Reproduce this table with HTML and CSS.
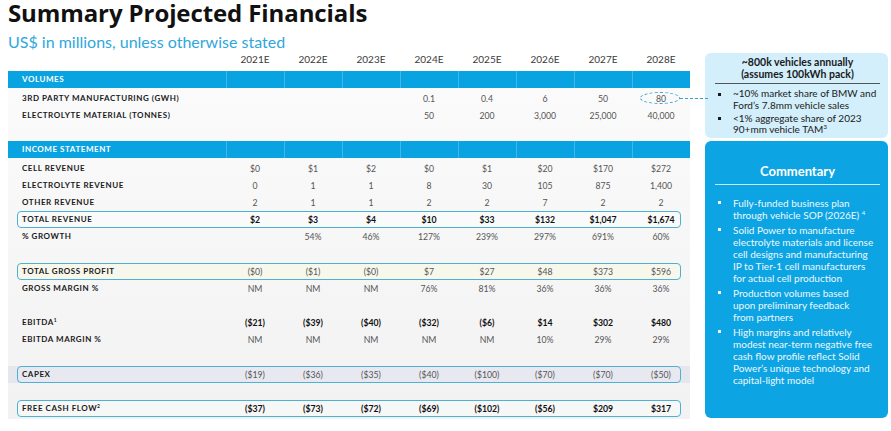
FILE: index.html
```html
<!DOCTYPE html>
<html lang="en">
<head>
<meta charset="utf-8">
<title>Summary Projected Financials</title>
<link rel="stylesheet" href="styles.css">
</head>
<body>
<div class="page">
  <h1 class="title">Summary Projected Financials</h1>
  <div class="main">
    <div class="left">
      <div class="subtitle">US$ in millions, unless otherwise stated</div>
      <div class="row yrs">
        <div></div><div class="c">2021E</div><div class="c">2022E</div><div class="c">2023E</div><div class="c">2024E</div><div class="c">2025E</div><div class="c">2026E</div><div class="c">2027E</div><div class="c">2028E</div>
      </div>
      <div class="tbl">
        <div class="row bar"><div class="lbl">Volumes</div><div class="c"></div><div class="c"></div><div class="c"></div><div class="c"></div><div class="c"></div><div class="c"></div><div class="c"></div><div class="c"></div></div>
        <div class="row"><div class="lbl">3rd Party Manufacturing (GWh)</div><div class="c"></div><div class="c"></div><div class="c"></div><div class="c">0.1</div><div class="c">0.4</div><div class="c">6</div><div class="c">50</div><div class="c circ">80</div></div>
        <div class="row"><div class="lbl">Electrolyte Material (Tonnes)</div><div class="c"></div><div class="c"></div><div class="c"></div><div class="c">50</div><div class="c">200</div><div class="c">3,000</div><div class="c">25,000</div><div class="c">40,000</div></div>
        <div class="row"></div>
        <div class="row bar"><div class="lbl">Income Statement</div><div class="c"></div><div class="c"></div><div class="c"></div><div class="c"></div><div class="c"></div><div class="c"></div><div class="c"></div><div class="c"></div></div>
        <div class="row"><div class="lbl">Cell Revenue</div><div class="c">$0</div><div class="c">$1</div><div class="c">$2</div><div class="c">$0</div><div class="c">$1</div><div class="c">$20</div><div class="c">$170</div><div class="c">$272</div></div>
        <div class="row"><div class="lbl">Electrolyte Revenue</div><div class="c">0</div><div class="c">1</div><div class="c">1</div><div class="c">8</div><div class="c">30</div><div class="c">105</div><div class="c">875</div><div class="c">1,400</div></div>
        <div class="row"><div class="lbl">Other Revenue</div><div class="c">2</div><div class="c">1</div><div class="c">1</div><div class="c">2</div><div class="c">2</div><div class="c">7</div><div class="c">2</div><div class="c">2</div></div>
        <div class="row boxed bold box-rev"><div class="lbl">Total Revenue</div><div class="c">$2</div><div class="c">$3</div><div class="c">$4</div><div class="c">$10</div><div class="c">$33</div><div class="c">$132</div><div class="c">$1,047</div><div class="c">$1,674</div></div>
        <div class="row"><div class="lbl">% Growth</div><div class="c"></div><div class="c">54%</div><div class="c">46%</div><div class="c">127%</div><div class="c">239%</div><div class="c">297%</div><div class="c">691%</div><div class="c">60%</div></div>
        <div class="row"></div>
        <div class="row boxed box-gp"><div class="lbl">Total Gross Profit</div><div class="c">($0)</div><div class="c">($1)</div><div class="c">($0)</div><div class="c">$7</div><div class="c">$27</div><div class="c">$48</div><div class="c">$373</div><div class="c">$596</div></div>
        <div class="row"><div class="lbl">Gross Margin %</div><div class="c">NM</div><div class="c">NM</div><div class="c">NM</div><div class="c">76%</div><div class="c">81%</div><div class="c">36%</div><div class="c">36%</div><div class="c">36%</div></div>
        <div class="row"></div>
        <div class="row bold"><div class="lbl">EBITDA<sup>1</sup></div><div class="c">($21)</div><div class="c">($39)</div><div class="c">($40)</div><div class="c">($32)</div><div class="c">($6)</div><div class="c">$14</div><div class="c">$302</div><div class="c">$480</div></div>
        <div class="row"><div class="lbl">EBITDA Margin %</div><div class="c">NM</div><div class="c">NM</div><div class="c">NM</div><div class="c">NM</div><div class="c">NM</div><div class="c">10%</div><div class="c">29%</div><div class="c">29%</div></div>
        <div class="row"></div>
        <div class="row boxed box-capex"><div class="lbl">Capex</div><div class="c">($19)</div><div class="c">($36)</div><div class="c">($35)</div><div class="c">($40)</div><div class="c">($100)</div><div class="c">($70)</div><div class="c">($70)</div><div class="c">($50)</div></div>
        <div class="row"></div>
        <div class="row boxed bold box-fcf"><div class="lbl">Free Cash Flow<sup>2</sup></div><div class="c">($37)</div><div class="c">($73)</div><div class="c">($72)</div><div class="c">($69)</div><div class="c">($102)</div><div class="c">($56)</div><div class="c">$209</div><div class="c">$317</div></div>
      </div>
    </div>
    <aside class="side">
      <div class="note">
        <h3>~800k vehicles annually<br>(assumes 100kWh pack)</h3>
        <ul>
          <li>~10% market share of BMW and<br>Ford’s 7.8mm vehicle sales</li>
          <li>&lt;1% aggregate share of 2023<br>90+mm vehicle TAM<sup>3</sup></li>
        </ul>
      </div>
      <div class="comm">
        <h3>Commentary</h3>
        <ul>
          <li>Fully-funded business plan<br>through vehicle SOP (2026E) <sup>4</sup></li>
          <li>Solid Power to manufacture<br>electrolyte materials and license<br>cell designs and manufacturing<br>IP to Tier-1 cell manufacturers<br>for actual cell production</li>
          <li>Production volumes based<br>upon preliminary feedback<br>from partners</li>
          <li>High margins and relatively<br>modest near-term negative free<br>cash flow profile reflect Solid<br>Power’s unique technology and<br>capital-light model</li>
        </ul>
      </div>
    </aside>
  </div>
</div>
</body>
</html>
```

FILE: styles.css
```css
html, body {
  margin: 0;
  padding: 0;
  background: #ffffff;
}

body {
  font-family: Lato, "Open Sans", sans-serif;
  color: #1a1a1a;
}

.page {
  width: 891px;
  height: 431px;
  padding-left: 8px;
  box-sizing: border-box;
  overflow: hidden;
}

.title {
  margin: 0;
  font-family: "Open Sans", Lato, sans-serif;
  font-size: 24px;
  line-height: 25px;
  font-weight: 700;
  letter-spacing: -0.1px;
  color: #111;
  white-space: nowrap;
}

.main {
  display: flex;
  align-items: flex-start;
}

.left {
  width: 682px;
  flex: none;
}

.subtitle {
  margin-top: 7px;
  height: 19px;
  line-height: 19px;
  font-size: 16px;
  color: #2ea7dc;
  white-space: nowrap;
}

.row {
  display: grid;
  grid-template-columns: 218px repeat(8, 58px);
  height: 17.2px;
  line-height: 17.2px;
  position: relative;
  font-size: 8.7px;
  color: #555;
}

.row > div {
  position: relative;
  z-index: 1;
  white-space: nowrap;
}

.c {
  text-align: center;
}

.yrs {
  height: 20px;
  line-height: 17px;
  font-size: 10px;
  color: #3a3a3a;
}

.tbl {
  background: linear-gradient(#fbfbfb, #f2f2f2);
  padding-bottom: 2px;
}

.lbl {
  padding-left: 14px;
  font-weight: 700;
  font-size: 8px;
  letter-spacing: 0.55px;
  text-transform: uppercase;
  color: #1a1a1a;
}

.lbl sup {
  font-size: 5px;
  letter-spacing: 0;
  vertical-align: 3px;
  line-height: 0;
}

.bar {
  height: 17px;
  line-height: 17px;
  background: #0aa3e2;
  margin-bottom: 1.5px;
}

.bar .lbl {
  color: #ffffff;
}

.bar .c {
  border-left: 1px solid rgba(255, 255, 255, 0.22);
}

.bold .c {
  font-weight: 700;
  color: #111;
}

.boxed::before {
  content: "";
  position: absolute;
  left: 9px;
  right: 9px;
  top: 0;
  bottom: 0;
  border: 1.5px solid #4fb0d6;
  border-radius: 4px;
  z-index: 0;
}

.box-rev::before {
  background: #f9fbfb;
}

.box-gp::before {
  background: #f7f7ec;
}

.box-fcf::before {
  background: #f6f7f7;
}

.box-capex {
  background: #e6e6ee;
}

.box-capex::before {
  background: #e8e8f0;
}

.circ::before {
  content: "";
  position: absolute;
  left: 8px;
  top: 2px;
  width: 40px;
  height: 12px;
  box-sizing: border-box;
  border: 1.3px dashed #3a9fd2;
  border-radius: 50%;
}

.circ::after {
  content: "";
  position: absolute;
  left: 48px;
  top: 8px;
  width: 28px;
  border-top: 1.3px dashed #3a9fd2;
}

.side {
  margin-left: 15px;
  width: 183px;
  flex: none;
  padding-top: 28px;
  display: flex;
  flex-direction: column;
  gap: 3px;
}

.note {
  height: 85px;
  box-sizing: border-box;
  background: #d3effb;
  border-radius: 6px;
  padding: 4px 8px 0 10px;
}

.note h3 {
  margin: 0;
  text-align: center;
  font-size: 10.5px;
  line-height: 11.5px;
  font-weight: 700;
  color: #1a1a1a;
  padding-bottom: 3px;
  border-bottom: 1px solid #555;
}

.side ul {
  list-style: none;
  margin: 4px 0 0;
  padding: 0 0 0 18px;
}

.side li {
  position: relative;
  white-space: nowrap;
}

.side li::before {
  content: "";
  position: absolute;
  left: -15px;
  top: 4.5px;
  width: 3px;
  height: 3px;
  background: currentColor;
}

.note li {
  font-size: 10px;
  line-height: 11.5px;
  color: #1a1a1a;
  margin-bottom: 1.5px;
}

.side sup {
  font-size: 6px;
  line-height: 0;
  vertical-align: 4px;
}

.comm {
  height: 277px;
  box-sizing: border-box;
  background: #0ca4e3;
  border-radius: 6px;
  padding: 21.5px 8px 0 10px;
  color: #ffffff;
}

.comm h3 {
  margin: 0;
  text-align: center;
  font-size: 13px;
  line-height: 16px;
  font-weight: 700;
  padding-bottom: 5px;
  border-bottom: 1.5px solid #c5ebfa;
}

.comm ul {
  margin-top: 12px;
}

.comm li {
  font-size: 10px;
  line-height: 12px;
  color: #eef8fe;
  margin-bottom: 3px;
}
```
